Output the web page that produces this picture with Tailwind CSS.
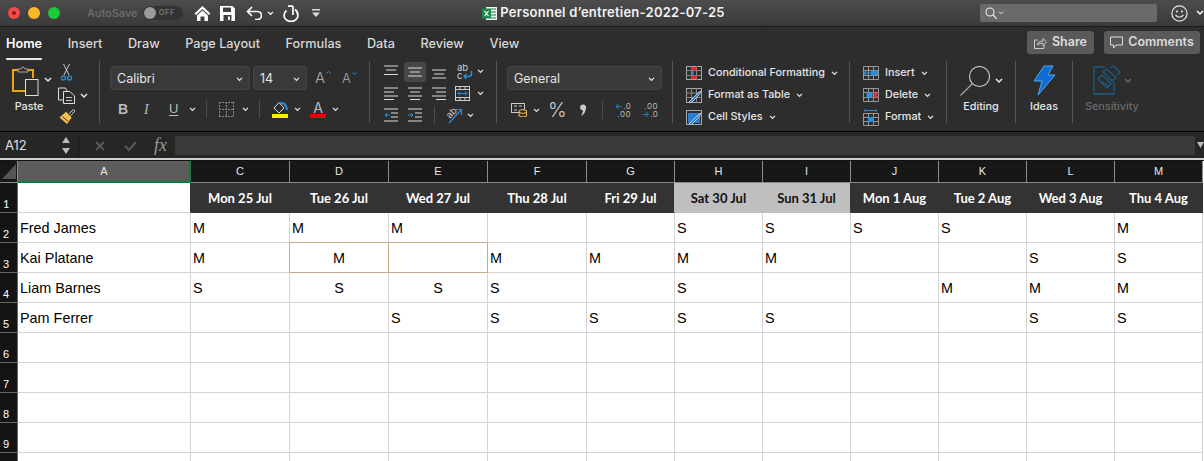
<!doctype html>
<html lang="en">
<head>
<meta charset="UTF-8">
<title>Personnel d'entretien-2022-07-25</title>
<script src="https://cdn.jsdelivr.net/npm/@tailwindcss/browser@4"></script>
</head>
<body class="w-[1204px] h-[461px] overflow-hidden bg-white font-[Inter] text-[#e6e6e6]">
<svg class="hidden">
  <symbol id="chev" viewBox="0 0 8 6"><path d="M1 1l3 3 3-3" fill="none" stroke="currentColor" stroke-width="1.5"/></symbol>
</svg>

<!-- title bar -->
<div class="flex items-center h-[27px] border-b border-[#1a1a1a] bg-linear-to-b from-[#4c4c4c] to-[#3a3a3a]">
  <div class="flex gap-[8px] pl-[8px]">
    <span class="flex items-center justify-center w-[12px] h-[12px] rounded-full bg-[#f6494a]"><span class="w-[4px] h-[4px] rounded-full bg-[#8c1a1a]"></span></span>
    <span class="w-[12px] h-[12px] rounded-full bg-[#fdb827]"></span>
    <span class="w-[12px] h-[12px] rounded-full bg-[#1ec93a]"></span>
  </div>
  <span class="ml-[27px] w-[56px] text-[11px] font-medium text-[#6f6f6f]">AutoSave</span>
  <div class="flex items-center w-[40px] h-[14px] rounded-full bg-[#333]">
    <span class="ml-[1px] w-[12px] h-[12px] rounded-full bg-[#9a9a9a]"></span>
    <span class="ml-[3px] text-[7.5px] tracking-[0.5px] font-semibold text-[#777]">OFF</span>
  </div>
  <svg class="ml-[11px] w-[17px] h-[17px]" viewBox="0 0 17 17"><path d="M8.5 1L0.5 8.5 2 10 8.500 4 15 10 16.500 8.500Z" fill="#fff"/><path d="M3 10.500L8.500 5.500 14 10.500V16H10.500V11.500H6.500V16H3Z" fill="#fff"/></svg>
  <svg class="ml-[9px] w-[15px] h-[15px]" viewBox="0 0 15 15"><path d="M0 0H12.500L15 2.500V15H0Z" fill="#fff"/><rect x="3" y="1.500" width="8" height="4.500" fill="#3f3f3f"/><rect x="3.500" y="9" width="8" height="6" fill="#3f3f3f"/><rect x="8" y="10.500" width="2" height="3.500" fill="#fff"/></svg>
  <svg class="ml-[11px] w-[17px] h-[14px]" viewBox="0 0 17 14"><path d="M6 1L1.500 5.500 6 10M2 5.500H11Q15.500 5.500 15.500 9.500T11 13.500H9" fill="none" stroke="#fff" stroke-width="1.600"/></svg>
  <svg class="ml-[5px] w-[7px] h-[5px] text-white"><use href="#chev"/></svg>
  <svg class="ml-[9px] w-[16px] h-[17px]" viewBox="0 0 16 17"><path d="M10 1V10M10 1H5" fill="none" stroke="#fff" stroke-width="1.700"/><path d="M12 4.500Q15 6.500 15 10.500A7 6 0 0 1 1 10.500Q1 7.500 3.500 5.500" fill="none" stroke="#fff" stroke-width="1.700"/></svg>
  <svg class="ml-[13px] w-[8px] h-[8px]" viewBox="0 0 8 8"><rect width="8" height="1.500" y="0" fill="#ddd"/><path d="M0 3.500H8L4 8Z" fill="#ddd"/></svg>
  <div class="flex items-center ml-[162px] w-[243px]">
    <svg class="shrink-0 w-[15px] h-[15px]" viewBox="0 0 15 15"><rect x="4" y="1" width="11" height="13" fill="#f4f4f4"/><path d="M9 3H14M9 6H14M9 9H14M9 12H14" stroke="#1f7a47"/><rect y="2.500" width="9" height="10" fill="#1f8a4f"/><path d="M2.500 5L6.500 10M6.500 5L2.500 10" stroke="#fff" stroke-width="1.200"/></svg>
    <span class="ml-[3px] text-[13px] font-semibold tracking-[0.25px] text-[#f2f2f2] whitespace-nowrap">Personnel d’entretien-2022-07-25</span>
  </div>
  <div class="flex items-center ml-[255px] w-[178px] h-[18px] rounded-[2px] bg-[#6a6a6a]">
    <svg class="ml-[5px] w-[12px] h-[12px]" viewBox="0 0 12 12"><circle cx="5" cy="5" r="4" fill="none" stroke="#eee" stroke-width="1.100"/><path d="M8 8l4 4" stroke="#eee" stroke-width="1.100"/></svg>
    <svg class="ml-[1px] w-[6px] h-[4px] text-[#eee]"><use href="#chev"/></svg>
  </div>
  <svg class="ml-[14px] w-[17px] h-[17px]" viewBox="0 0 17 17"><circle cx="8.500" cy="8.500" r="7.600" fill="none" stroke="#e6e6e6" stroke-width="1.200"/><circle cx="6" cy="6.500" r="1" fill="#e6e6e6"/><circle cx="11" cy="6.500" r="1" fill="#e6e6e6"/><path d="M4.500 10Q8.500 14.500 12.500 10" fill="none" stroke="#e6e6e6" stroke-width="1.200"/></svg>
  <svg class="ml-[8px] w-[8px] h-[6px] text-white"><use href="#chev"/></svg>
</div>

<!-- ribbon -->
<div class="h-[105px] border-b border-black bg-[#2d2d2d]">
  <div class="flex items-start h-[31px] text-[12.7px] font-medium text-[#d8d8d8]">
    <div class="flex gap-[25.5px] pl-[6px] pt-[7px]">
      <span class="relative font-semibold text-white">Home<span class="absolute left-0 right-0 -bottom-[7px] h-[2.500px] rounded-full bg-[#e8e8e8]"></span></span>
      <span>Insert</span><span>Draw</span><span>Page Layout</span><span>Formulas</span><span>Data</span><span>Review</span><span>View</span>
    </div>
    <div class="flex gap-[10px] ml-auto mr-[4px] mt-[4px] text-[12.5px] font-semibold text-[#dcdcdc]">
      <div class="flex items-center justify-center gap-[5px] w-[67px] h-[23px] rounded-[3px] bg-[#5a5a5a]">
        <svg class="w-[13px] h-[12px]" viewBox="0 0 13 12"><path d="M4 3H0.500V11.500H10V8M3.500 8Q4 4 9 4V1.500L12.500 5 9 8.500V6Q5.500 6 3.500 8Z" fill="none" stroke="#ccc"/></svg>Share
      </div>
      <div class="flex items-center justify-center gap-[5px] w-[96px] h-[23px] rounded-[3px] bg-[#5a5a5a]">
        <svg class="w-[13px] h-[13px]" viewBox="0 0 13 13"><path d="M0.500 1H12.500V9H6L3.500 12V9H0.500Z" fill="none" stroke="#ddd"/></svg>Comments
      </div>
    </div>
  </div>

  <div class="flex items-start mt-[3px] text-[10.8px]">
    <!-- clipboard -->
    <div class="flex w-[99px] pl-[12px]">
      <div class="w-[46px]">
        <div class="flex items-center mt-[3px]">
          <svg class="w-[28px] h-[32px]" viewBox="0 0 28 32"><path d="M6 6H1V27H13M16 6H21V14" fill="none" stroke="#f0a30a" stroke-width="2"/><path d="M6 8V5H9Q11 1 13 5H16V8Z" fill="none" stroke="#aaa"/><rect x="13.500" y="15.500" width="12.500" height="16" fill="#2d2d2d" stroke="#ddd"/></svg>
          <svg class="ml-[4px] w-[8px] h-[6px]"><use href="#chev"/></svg>
        </div>
        <div class="mt-[3px] w-[34px] text-center font-medium">Paste</div>
      </div>
      <div class="flex flex-col">
        <svg class="ml-[3px] mt-[3px] w-[11px] h-[17px]" viewBox="0 0 11 17"><path d="M2.500 0L8 11M8.500 0L3 11" stroke="#ccc"/><circle cx="2.500" cy="14" r="2" fill="none" stroke="#2a8fdc" stroke-width="1.300"/><circle cx="8.500" cy="14" r="2" fill="none" stroke="#2a8fdc" stroke-width="1.300"/></svg>
        <div class="flex items-center mt-[6px]">
          <svg class="w-[17px] h-[17px]" viewBox="0 0 17 17"><path d="M5 13H0.500V1H7.500L9 4" fill="none" stroke="#ddd"/><path d="M5.500 4.500H12L16.500 9V16.500H5.500Z" fill="none" stroke="#ddd"/><path d="M8 10.500H14M8 13.500H14" stroke="#ccc"/></svg>
          <svg class="ml-[5px] w-[8px] h-[6px]"><use href="#chev"/></svg>
        </div>
        <svg class="mt-[5px] w-[18px] h-[16px]" viewBox="0 0 18 17"><path d="M11 5L16 0.500 17.500 2 13 7" fill="none" stroke="#ddd"/><path d="M8 3L14 9 9 16 1 9Z" fill="#f2c14e"/><path d="M4 8L10 13" stroke="#2d2d2d"/></svg>
      </div>
    </div>
    <div class="w-px h-[62px] bg-[#555]"></div>

    <!-- font -->
    <div class="w-[269px] pl-[10px]">
      <div class="flex items-center mt-[5px] h-[24px]">
        <div class="flex items-center justify-between w-[140px] h-[24px] px-[6px] pt-[2px] rounded-[3px] bg-[#3a3a3a] border border-[#444] text-[12.500px]">Calibri<svg class="w-[7px] h-[5px]"><use href="#chev"/></svg></div>
        <div class="flex items-center justify-between ml-[3px] w-[54px] h-[24px] px-[6px] pt-[2px] rounded-[3px] bg-[#3a3a3a] border border-[#444] text-[12.500px]">14<svg class="w-[7px] h-[5px]"><use href="#chev"/></svg></div>
        <span class="flex items-start ml-[8px] w-[27px] text-[15px] leading-[16px] font-light text-[#aaa]">A<svg class="ml-[1px] mt-[1px] w-[5px] h-[3px]" viewBox="0 0 5 3"><path d="M0.500 2.500L2.500 0.500 4.500 2.500" fill="none" stroke="#2a8fdc"/></svg></span>
        <span class="flex items-start text-[13px] leading-[16px] font-light text-[#aaa]">A<svg class="ml-[1px] mt-[2px] w-[5px] h-[3px]" viewBox="0 0 5 3"><path d="M0.500 0.500L2.500 2.500 4.500 0.500" fill="none" stroke="#2a8fdc"/></svg></span>
      </div>
      <div class="flex items-center mt-[8px] h-[22px]">
        <span class="ml-[8px] w-[26px] font-['Liberation_Sans'] text-[14px] font-bold text-[#bbb]">B</span>
        <span class="w-[25px] font-['Liberation_Serif'] text-[14px] italic text-[#bbb]">I</span>
        <span class="w-[15px] font-['Liberation_Sans'] text-[13px] underline underline-offset-2 text-[#bbb]">U</span>
        <svg class="ml-[5px] w-[7px] h-[5px]"><use href="#chev"/></svg>
        <span class="ml-[10px] w-px h-[18px] bg-[#4c4c4c]"></span>
        <svg class="ml-[12px] w-[15px] h-[15px]" viewBox="0 0 15 15"><path d="M0 0.500H15M0 14.500H15M0.500 0V15M14.500 0V15M0 7.500H15M7.500 0V15" fill="none" stroke="#888" stroke-dasharray="2 1"/></svg>
        <svg class="ml-[8px] w-[7px] h-[5px]"><use href="#chev"/></svg>
        <span class="ml-[10px] w-px h-[18px] bg-[#4c4c4c]"></span>
        <div class="ml-[12px] w-[16px]">
          <svg class="w-[16px] h-[13px]" viewBox="0 0 16 13"><path d="M2 7L7 1.500 12 7 7 12Z" fill="none" stroke="#ddd"/><path d="M8 2Q14 1 15 9" fill="none" stroke="#2a8fdc" stroke-width="2"/></svg>
          <div class="h-[4px] bg-[#f8f000]"></div>
        </div>
        <svg class="ml-[6px] w-[7px] h-[5px]"><use href="#chev"/></svg>
        <div class="ml-[9px] w-[16px] text-center">
          <div class="h-[13px] text-[14px] leading-[13px] text-[#bbb]">A</div>
          <div class="h-[4px] bg-[#ee0000]"></div>
        </div>
        <svg class="ml-[6px] w-[7px] h-[5px]"><use href="#chev"/></svg>
      </div>
    </div>
    <div class="w-px h-[62px] bg-[#555]"></div>

    <!-- alignment -->
    <div class="w-[126px] pl-[14px]">
      <div class="flex items-center h-[21px]">
        <svg class="w-[14px] h-[14px]" viewBox="0 0 14 14"><path d="M0 1H14M2 5H12M0 9.500H14" stroke="#ddd"/></svg>
        <span class="flex items-center justify-center ml-[6px] w-[22px] h-[20px] rounded-[3px] bg-[#474747]"><svg class="w-[14px] h-[14px]" viewBox="0 0 14 14"><path d="M0 3H14M2 7H12M0 11H14" stroke="#ddd"/></svg></span>
        <svg class="ml-[6px] w-[14px] h-[14px]" viewBox="0 0 14 14"><path d="M0 5H14M2 9H12M0 13H14" stroke="#ddd"/></svg>
        <span class="relative ml-[11px] w-[16px] h-[18px] pt-[1px] text-[9.5px] leading-[8px] text-[#ccc]">ab<br>c<svg class="absolute right-0 bottom-[1px] w-[11px] h-[9px]" viewBox="0 0 11 9"><path d="M9.500 0V3Q9.500 5.500 6.500 5.500H2M4.500 3L2 5.500 4.500 8" fill="none" stroke="#2a8fdc" stroke-width="1.400"/></svg></span>
        <svg class="ml-[4px] w-[7px] h-[5px]"><use href="#chev"/></svg>
      </div>
      <div class="flex items-center h-[22px]">
        <svg class="w-[14px] h-[14px]" viewBox="0 0 14 14"><path d="M0 2H14M0 6H10M0 10H14M0 13.500H10" stroke="#ddd"/></svg>
        <svg class="ml-[10px] w-[14px] h-[14px]" viewBox="0 0 14 14"><path d="M0 2H14M2 6H12M0 10H14M2 13.500H12" stroke="#ddd"/></svg>
        <svg class="ml-[10px] w-[14px] h-[14px]" viewBox="0 0 14 14"><path d="M0 2H14M4 6H14M0 10H14M4 13.500H14" stroke="#ddd"/></svg>
        <svg class="ml-[9px] w-[15px] h-[15px]" viewBox="0 0 15 15"><rect x="0.500" y="0.500" width="14" height="14" fill="none" stroke="#ccc"/><path d="M0 3.500H15M0 11.500H15M5 0V3.500M10 0V3.500M5 11.500V15M10 11.500V15" stroke="#ccc"/><path d="M3 7.500H12M5 5.500L3 7.500 5 9.500M10 5.500L12 7.500 10 9.500" fill="none" stroke="#2a8fdc"/></svg>
        <svg class="ml-[7px] w-[7px] h-[5px]"><use href="#chev"/></svg>
      </div>
      <div class="flex items-center h-[22px]">
        <svg class="w-[14px] h-[14px]" viewBox="0 0 14 14"><path d="M0 1H14M7 5H14M7 9H14M0 13H14" stroke="#ddd"/><path d="M6 7H1M3 5L1 7 3 9" fill="none" stroke="#2a8fdc"/></svg>
        <svg class="ml-[10px] w-[14px] h-[14px]" viewBox="0 0 14 14"><path d="M0 1H14M7 5H14M7 9H14M0 13H14" stroke="#ddd"/><path d="M0 7H5M3 5L5 7 3 9" fill="none" stroke="#2a8fdc"/></svg>
        <span class="ml-[12px] w-px h-[18px] bg-[#4c4c4c]"></span>
        <span class="relative ml-[11px] w-[18px] h-[17px]"><span class="absolute left-[0px] top-[1px] -rotate-45 text-[9.5px] leading-[10px] text-[#ccc]">ab</span><svg class="absolute left-0 top-0 w-[18px] h-[17px]" viewBox="0 0 18 17"><path d="M3 16L15 3M10 2.500H15.500V8" fill="none" stroke="#2a8fdc" stroke-width="1.200"/></svg></span>
        <svg class="ml-[3px] w-[7px] h-[5px]"><use href="#chev"/></svg>
      </div>
    </div>
    <div class="w-px h-[62px] bg-[#555]"></div>

    <!-- number -->
    <div class="w-[175px] pl-[10px]">
      <div class="flex items-center justify-between mt-[5px] w-[155px] h-[24px] px-[6px] pt-[2px] rounded-[3px] bg-[#3a3a3a] border border-[#444] text-[12.500px]">General<svg class="w-[7px] h-[5px]"><use href="#chev"/></svg></div>
      <div class="flex items-center mt-[9px] h-[22px]">
        <svg class="ml-[4px] w-[16px] h-[14px]" viewBox="0 0 16 14"><rect x="0.500" y="0.500" width="13" height="9" fill="none" stroke="#ccc"/><path d="M3 3H6M3 7H6M8 3H11" stroke="#ccc"/><path d="M8 7.500Q12 5.500 15.500 7.500V13Q12 15 8 13Z" fill="#2d2d2d" stroke="#f2c14e"/><path d="M8 9.500Q12 11.500 15.500 9.500" fill="none" stroke="#f2c14e"/></svg>
        <svg class="ml-[6px] w-[7px] h-[5px]"><use href="#chev"/></svg>
        <span class="ml-[8px] w-[31px] text-[20px] leading-[22px] font-light text-[#ccc]">%</span>
        <svg class="w-[8px] h-[13px]" viewBox="0 0 8 13"><path d="M1 3a3 3 0 1 1 6 1Q7 9 2 12Q4 8 4 6.500 1 6 1 3Z" fill="#ccc"/></svg>
        <span class="ml-[15px] w-px h-[18px] bg-[#4c4c4c]"></span>
        <div class="ml-[12px] w-[16px] text-[8px] leading-[8px] tracking-[0.5px] text-[#bbb] text-right"><span class="text-[#2a8fdc]">←</span>.0<br>.00</div>
        <div class="ml-[11px] w-[16px] text-[8px] leading-[8px] tracking-[0.5px] text-[#bbb] text-right">.00<br><span class="text-[#2a8fdc]">→</span>.0</div>
      </div>
    </div>
    <div class="w-px h-[62px] bg-[#555]"></div>

    <!-- styles -->
    <div class="w-[176px] pl-[13px] pt-[1px] font-medium">
      <div class="flex items-center h-[22px]">
        <svg class="w-[16px] h-[14px]" viewBox="0 0 16 14"><rect x="0.500" y="0.500" width="15" height="13" fill="none" stroke="#aaa"/><path d="M5.500 0V14M10.500 0V14M0 4.500H16M0 9.500H16" stroke="#888"/><path d="M5.500 1H10.500V4.500H5.500ZM5.500 9.500H10.500V13H5.500Z" fill="#e22"/><rect x="5.500" y="4.500" width="2" height="5" fill="#2a8fdc"/></svg>
        <span class="ml-[6px]">Conditional Formatting</span><svg class="ml-[6px] w-[7px] h-[5px]"><use href="#chev"/></svg>
      </div>
      <div class="flex items-center h-[22px]">
        <svg class="w-[16px] h-[15px]" viewBox="0 0 16 15"><rect x="0.500" y="0.500" width="15" height="14" fill="none" stroke="#aaa"/><path d="M0 5H16M0 9.500H16M5.500 0V15M10.500 0V15" stroke="#888"/><path d="M3 14L12 5 15 3 13 7 5 15Z" fill="#2a7fd0" stroke="#bcd"/></svg>
        <span class="ml-[6px]">Format as Table</span><svg class="ml-[6px] w-[7px] h-[5px]"><use href="#chev"/></svg>
      </div>
      <div class="flex items-center h-[22px]">
        <svg class="w-[16px] h-[15px]" viewBox="0 0 16 15"><rect x="0.500" y="0.500" width="15" height="14" fill="none" stroke="#aaa"/><rect x="2" y="3" width="12" height="10" fill="#2a7fd0"/><path d="M3 14L12 5 15 3 13 7 5 15Z" fill="#2a7fd0" stroke="#bcd"/></svg>
        <span class="ml-[6px]">Cell Styles</span><svg class="ml-[6px] w-[7px] h-[5px]"><use href="#chev"/></svg>
      </div>
    </div>
    <div class="w-px h-[62px] bg-[#555]"></div>

    <!-- cells -->
    <div class="w-[96px] pl-[13px] pt-[1px] font-medium">
      <div class="flex items-center h-[22px]">
        <svg class="w-[16px] h-[14px]" viewBox="0 0 16 14"><path d="M0.500 0.500H15.500V13.500H0.500ZM0 4.500H16M0 9.500H16M5.500 0V14M10.500 0V14" fill="none" stroke="#999"/><rect x="8" y="4.500" width="7" height="5" fill="#2a8fdc"/><path d="M9 7H1M3.500 4.500L1 7 3.500 9.500" fill="none" stroke="#2a8fdc" stroke-width="1.200"/></svg>
        <span class="ml-[6px]">Insert</span><svg class="ml-[6px] w-[7px] h-[5px]"><use href="#chev"/></svg>
      </div>
      <div class="flex items-center h-[22px]">
        <svg class="w-[16px] h-[14px]" viewBox="0 0 16 14"><path d="M0.500 0.500H15.500V13.500H0.500ZM0 4.500H16M0 9.500H16M5.500 0V14M10.500 0V14" fill="none" stroke="#999"/><rect x="3.500" y="4.500" width="6" height="5" fill="#2a8fdc"/><path d="M10.500 4L15 10M15 4L10.500 10" stroke="#e33" stroke-width="1.300"/></svg>
        <span class="ml-[6px]">Delete</span><svg class="ml-[6px] w-[7px] h-[5px]"><use href="#chev"/></svg>
      </div>
      <div class="flex items-center h-[22px]">
        <svg class="w-[16px] h-[17px]" viewBox="0 0 16 17"><path d="M0.500 4.500H15.500V16.500H0.500ZM0 8.500H16M0 12.500H16M5.500 4V17M10.500 4V17" fill="none" stroke="#999"/><rect x="5" y="8" width="6" height="5" fill="#2a8fdc"/><path d="M2 1.500H13M2 0V3M13 0V3" stroke="#2a8fdc"/></svg>
        <span class="ml-[6px]">Format</span><svg class="ml-[6px] w-[7px] h-[5px]"><use href="#chev"/></svg>
      </div>
    </div>
    <div class="w-px h-[62px] bg-[#555]"></div>

    <!-- editing -->
    <div class="w-[68px] pl-[13px]">
      <div class="flex items-center mt-[4px] h-[31px]">
        <svg class="w-[30px] h-[30px]" viewBox="0 0 30 30"><circle cx="19.500" cy="10.500" r="10" fill="none" stroke="#ccc" stroke-width="1.100"/><path d="M12.500 17.500L0.500 29.500" stroke="#aaa" stroke-width="1.100"/></svg>
        <svg class="ml-[5px] w-[8px] h-[6px]"><use href="#chev"/></svg>
      </div>
      <div class="mt-[3px] w-[42px] text-center font-medium">Editing</div>
    </div>
    <div class="w-px h-[62px] bg-[#555]"></div>

    <!-- ideas -->
    <div class="w-[56px] flex flex-col items-center">
      <svg class="mt-[4px] w-[22px] h-[31px]" viewBox="0 0 22 31"><path d="M11 1H20L15 10H22L5 30 9 16H1Z" fill="#0f6cd0" stroke="#4fa8f0"/></svg>
      <div class="mt-[3px] font-medium">Ideas</div>
    </div>
    <div class="w-px h-[62px] bg-[#555]"></div>

    <!-- sensitivity -->
    <div class="pl-[12px]">
      <div class="flex items-center mt-[4px] h-[31px] pl-[8px]">
        <svg class="w-[28px] h-[30px]" viewBox="0 0 28 30"><path d="M12 1H1V28H21V15" fill="none" stroke="#1c5d85" stroke-width="1.300"/><path d="M5 13L9 9 18 18 14 22Z M7 15L16 20M10 6L14 3 23 12 19 15ZM17 2L21 0 27 6 24 9" fill="none" stroke="#1c5d85" stroke-width="1.300"/></svg>
        <svg class="ml-[3px] w-[8px] h-[6px] text-[#666]"><use href="#chev"/></svg>
      </div>
      <div class="mt-[3px] font-medium text-[#6a6a6a]">Sensitivity</div>
    </div>
  </div>
</div>

<!-- formula bar -->
<div class="flex items-center h-[26px] bg-[#262626]">
  <span class="pl-[5px] pt-[2px] w-[62px] text-[13px] text-[#e0e0e0]">A12</span>
  <svg class="w-[8px] h-[17px]" viewBox="0 0 8 17"><path d="M4 0L8 6H0ZM4 17L8 11H0Z" fill="#bbb"/></svg>
  <span class="ml-[8px] w-[1px] h-[23px] bg-[#1a1a1a]"></span>
  <svg class="ml-[16px] mt-[1px] w-[10px] h-[10px]" viewBox="0 0 10 10"><path d="M1 1L9 9M9 1L1 9" stroke="#5a5a5a" stroke-width="2"/></svg>
  <svg class="ml-[19px] mt-[1px] w-[13px] h-[10px]" viewBox="0 0 13 10"><path d="M1 5L5 9 12 1" fill="none" stroke="#5a5a5a" stroke-width="2"/></svg>
  <span class="ml-[17px] w-[21px] font-['Liberation_Serif'] text-[18px] italic text-[#999]">fx</span>
  <div class="w-[1020px] h-[19px] rounded-[2px] bg-[#3a3a3a]"></div>
  <svg class="ml-[2px] w-[7px] h-[6px]" viewBox="0 0 7 6"><path d="M0 0H7L3.500 6Z" fill="#bbb"/></svg>
</div>
<div class="h-[2px] bg-[#cfcfcf]"></div>
<div class="h-[1px] bg-[#111]"></div>

<!-- sheet -->
<table class="table-fixed w-[1203px] border-separate border-spacing-0 font-['Liberation_Sans'] text-black text-[14.4px]">
  <colgroup>
    <col class="w-[18px]"><col class="w-[173px]"><col class="w-[99px]"><col class="w-[99px]"><col class="w-[99px]"><col class="w-[99px]"><col class="w-[88px]"><col class="w-[88px]"><col class="w-[88px]"><col class="w-[88px]"><col class="w-[88px]"><col class="w-[88px]"><col class="w-[88px]">
  </colgroup>
  <thead class="[&_th]:h-[22px] [&_th]:p-0 [&_th]:font-normal [&_th]:text-[11px] [&_th]:text-[#e8e8e8] [&_th]:bg-[#171717] [&_th]:border-r [&_th]:border-b [&_th]:border-[#8a8a8a]">
    <tr>
      <th><svg class="ml-[2px] w-[14px] h-[17px]" viewBox="0 0 14 17"><path d="M14 1V16H0Z" fill="#555"/></svg></th>
      <th class="bg-[#5c5c5c]! border-b-2! border-r-2! border-[#0f7b41]! pl-[1px]!">A</th>
      <th>C</th><th>D</th><th>E</th><th>F</th><th>G</th><th>H</th><th>I</th><th>J</th><th>K</th><th>L</th><th>M</th>
    </tr>
  </thead>
  <tbody class="[&_th]:p-0 [&_th]:pl-[3px] [&_th]:pb-[2px] [&_th]:align-bottom [&_th]:text-left [&_th]:font-normal [&_th]:text-[11px] [&_th]:leading-[12px] [&_th]:text-white [&_th]:bg-[#141414] [&_th]:border-b [&_th]:border-r [&_th]:border-[#666] [&_td]:h-[30px] [&_td]:p-0 [&_td]:pt-[2px] [&_td]:px-[2px] [&_td]:border-b [&_td]:border-r [&_td]:border-[#d4d4d4]">
    <tr class="font-[Lato] font-bold text-[13px] text-center text-white">
      <th class="h-[30px]">1</th>
      <td class="border-r-[#333]!"></td>
      <td class="bg-[#333] border-[#333]!">Mon 25 Jul</td><td class="bg-[#333] border-[#333]!">Tue 26 Jul</td><td class="bg-[#333] border-[#333]!">Wed 27 Jul</td><td class="bg-[#333] border-[#333]!">Thu 28 Jul</td><td class="bg-[#333] border-b-[#333]! border-r-[#bfbfbf]!">Fri 29 Jul</td>
      <td class="bg-[#bfbfbf] border-[#bfbfbf]! text-[#111]">Sat 30 Jul</td><td class="bg-[#bfbfbf] border-b-[#bfbfbf]! border-r-[#333]! text-[#111]">Sun 31 Jul</td>
      <td class="bg-[#333] border-[#333]!">Mon 1 Aug</td><td class="bg-[#333] border-[#333]!">Tue 2 Aug</td><td class="bg-[#333] border-[#333]!">Wed 3 Aug</td><td class="bg-[#333] border-[#333]!">Thu 4 Aug</td>
    </tr>
    <tr><th>2</th><td>Fred James</td><td>M</td><td class="border-b-[#c9a98a]!">M</td><td class="border-b-[#c9a98a]!">M</td><td></td><td></td><td>S</td><td>S</td><td>S</td><td>S</td><td></td><td>M</td></tr>
    <tr><th>3</th><td>Kai Platane</td><td class="border-r-[#c9a98a]!">M</td><td class="text-center border-b-[#c9a98a]! border-r-[#c9a98a]!">M</td><td class="border-b-[#c9a98a]! border-r-[#c9a98a]!"></td><td>M</td><td>M</td><td>M</td><td>M</td><td></td><td></td><td>S</td><td>S</td></tr>
    <tr><th>4</th><td>Liam Barnes</td><td>S</td><td class="text-center">S</td><td class="text-center">S</td><td>S</td><td></td><td>S</td><td></td><td></td><td>M</td><td>M</td><td>M</td></tr>
    <tr><th>5</th><td>Pam Ferrer</td><td></td><td></td><td>S</td><td>S</td><td>S</td><td>S</td><td>S</td><td></td><td></td><td>S</td><td>S</td></tr>
    <tr><th>6</th><td></td><td></td><td></td><td></td><td></td><td></td><td></td><td></td><td></td><td></td><td></td><td></td></tr>
    <tr><th>7</th><td></td><td></td><td></td><td></td><td></td><td></td><td></td><td></td><td></td><td></td><td></td><td></td></tr>
    <tr><th>8</th><td></td><td></td><td></td><td></td><td></td><td></td><td></td><td></td><td></td><td></td><td></td><td></td></tr>
    <tr><th>9</th><td></td><td></td><td></td><td></td><td></td><td></td><td></td><td></td><td></td><td></td><td></td><td></td></tr>
    <tr><th></th><td></td><td></td><td></td><td></td><td></td><td></td><td></td><td></td><td></td><td></td><td></td><td></td></tr>
  </tbody>
</table>
</body>
</html>
